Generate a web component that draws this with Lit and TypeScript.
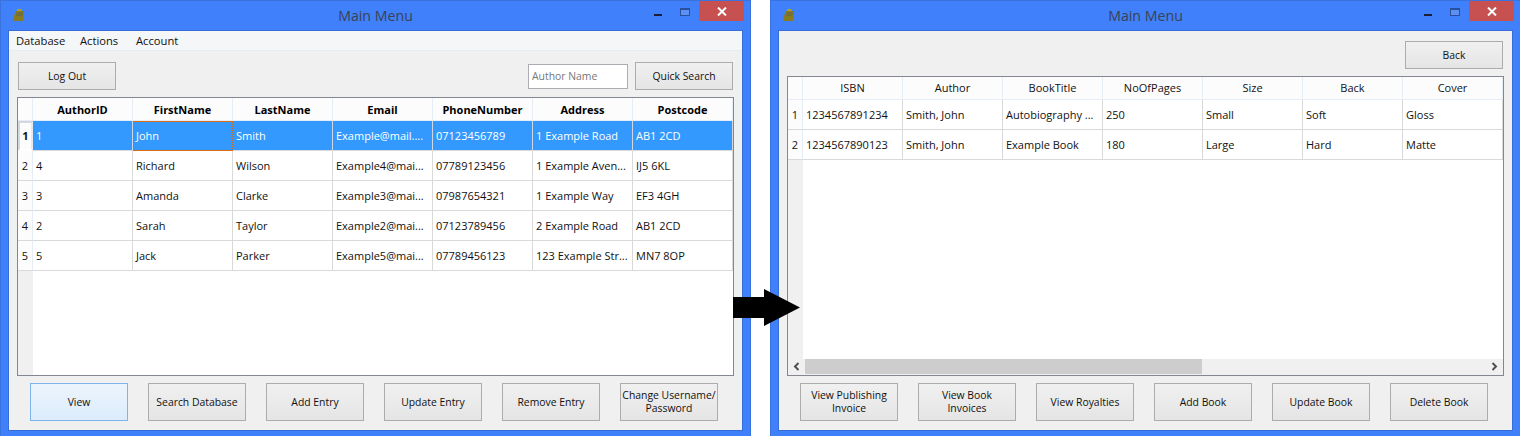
import { LitElement, html, css, nothing } from "lit";
import { customElement, property } from "lit/decorators.js";

const bookIcon = html`<svg class="icon" width="14" height="14" viewBox="0 0 14 14">
  <path d="M5 0h4l1 2H5z" fill="#a8a030"/>
  <path d="M4 2h8l-1 10H1l1-5z" fill="#8a7a22"/>
  <path d="M5 3h6l-.5 4H4z" fill="#74703a"/>
</svg>`;

@customElement("data-grid")
class DataGrid extends LitElement {
  @property({ type: Array }) columns: string[] = [];
  @property({ type: Array }) rows: string[][] = [];
  @property({ type: Boolean }) bold = false;
  @property({ type: Boolean }) selectable = false;
  @property({ type: Boolean }) scroll = false;

  static styles = css`
    :host { display: flex; flex-direction: column; flex: 1; min-height: 0; border: 1px solid #828790; background: #fff; overflow: hidden; }
    .row { display: flex; height: 30px; flex: none; }
    .head { height: 23px; background: #fcfcfd; }
    .rh { width: 15px; flex: none; box-sizing: border-box; text-align: center; line-height: 29px; border-right: 1px solid #e6edf7; border-bottom: 1px solid #d9d9d9; background: #fcfcfd; }
    .head .rh { border-bottom: 1px solid #e6edf7; }
    .rh.cur { font-weight: 700; border: 2px solid #d5d8dc; border-right-color: #e6e8ea; border-bottom-color: #fff; line-height: 25px; }
    .cell { width: 100px; flex: none; box-sizing: border-box; padding: 0 3px; line-height: 29px; white-space: nowrap; overflow: hidden; border-right: 1px solid #d9d9d9; border-bottom: 1px solid #d9d9d9; color: #111; }
    .th { text-align: center; line-height: 22px; border-right: 1px solid #e6edf7; border-bottom: 1px solid #e6edf7; }
    .bold .th { font-weight: 700; color: #000; line-height: 24px; }
    .sel .cell { background: #3399ff; color: #fff; border-right-color: #cfd8e2; border-bottom-color: #d9d9d9; }
    .sel .cell.focus { border: 1px dotted #d9690f; padding: 0 2px; line-height: 27px; }
    .rest { flex: 1; display: flex; min-height: 0; }
    .strip { width: 15px; background: #f0f0f0; }
    .bar { height: 16px; flex: none; display: flex; align-items: flex-start; background: #f0f0f0; }
    .arrow { width: 17px; height: 15px; flex: none; display: flex; align-items: center; justify-content: center; }
    .thumb { width: 397px; height: 15px; background: #cdcdcd; }
    .track { flex: 1; }
  `;

  render() {
    return html`
      <div class="row head ${this.bold ? "bold" : ""}">
        <div class="rh"></div>
        ${this.columns.map((c) => html`<div class="cell th">${c}</div>`)}
      </div>
      ${this.rows.map((r, i) => {
        const sel = this.selectable && i === 0;
        return html`<div class="row ${sel ? "sel" : ""}">
          <div class="rh ${sel ? "cur" : ""}">${i + 1}</div>
          ${r.map((v, j) => html`<div class="cell ${sel && j === 1 ? "focus" : ""}">${v}</div>`)}
        </div>`;
      })}
      <div class="rest"><div class="strip"></div></div>
      ${this.scroll
        ? html`<div class="bar">
            <div class="arrow"><svg width="7" height="9" viewBox="0 0 7 9"><path d="M5.500 1L2 4.500 5.500 8" fill="none" stroke="#505050" stroke-width="2"/></svg></div>
            <div class="thumb"></div>
            <div class="track"></div>
            <div class="arrow"><svg width="7" height="9" viewBox="0 0 7 9"><path d="M1.500 1L5 4.500 1.500 8" fill="none" stroke="#505050" stroke-width="2"/></svg></div>
          </div>`
        : nothing}
    `;
  }
}

@customElement("app-window")
class AppWindow extends LitElement {
  static styles = css`
    :host { display: flex; flex-direction: column; width: 751px; height: 436px; box-sizing: border-box; background: #4080fb; border: 1px solid #3a72de; border-bottom: none; flex: none; }
    .title { height: 29px; flex: none; display: grid; grid-template-columns: 1fr auto 1fr; align-items: start; }
    .left { padding: 8px 0 0 11px; }
    .icon { display: block; }
    .name { font-size: 14.200px; line-height: 30px; color: #3b4252; font-family: "Open Sans", "Noto Sans", sans-serif; }
    .ctrls { display: flex; justify-content: flex-end; padding-right: 6px; }
    .min { width: 8px; height: 2px; background: #1a1f33; margin: 13px 18px 0 0; }
    .max { width: 8px; height: 5px; border: 1px solid #2a4f9c; border-top-width: 2px; margin: 7px 9px 0 0; background: #5d90f5; }
    .close { width: 45px; height: 20px; background: #c75050; display: flex; align-items: center; justify-content: center; }
    .client { flex: 1; min-height: 0; margin: 0 7px 5px 7px; border: 1px solid #356ed8; background: #f0f0f0; display: flex; flex-direction: column; }
  `;
  render() {
    return html`
      <div class="title">
        <div class="left">${bookIcon}</div>
        <div class="name">Main Menu</div>
        <div class="ctrls">
          <div class="min"></div>
          <div class="max"></div>
          <div class="close"><svg width="10" height="9" viewBox="0 0 10 9"><path d="M1 .5L9 8.500M9 .5L1 8.500" stroke="#fff" stroke-width="2"/></svg></div>
        </div>
      </div>
      <div class="client"><slot></slot></div>
    `;
  }
}

const authors = [
  ["1", "John", "Smith", "Example@mail....", "07123456789", "1 Example Road", "AB1 2CD"],
  ["4", "Richard", "Wilson", "Example4@mai...", "07789123456", "1 Example Aven...", "IJ5 6KL"],
  ["3", "Amanda", "Clarke", "Example3@mai...", "07987654321", "1 Example Way", "EF3 4GH"],
  ["2", "Sarah", "Taylor", "Example2@mai...", "07123789456", "2 Example Road", "AB1 2CD"],
  ["5", "Jack", "Parker", "Example5@mai...", "07789456123", "123 Example Str...", "MN7 8OP"],
];
const books = [
  ["1234567891234", "Smith, John", "Autobiography ...", "250", "Small", "Soft", "Gloss"],
  ["1234567890123", "Smith, John", "Example Book", "180", "Large", "Hard", "Matte"],
];

@customElement("app-root")
class AppRoot extends LitElement {
  static styles = css`
    :host { display: block; width: 1520px; height: 438px; background: #fff; overflow: hidden; font-family: "Open Sans", "Noto Sans", sans-serif; font-size: 11px; color: #111; }
    .page { position: relative; display: flex; gap: 19px; }
    .menu { height: 20px; flex: none; box-sizing: border-box; display: grid; grid-template-columns: 64px 56px auto; justify-content: start; padding-left: 7px; background: #f5f6f7; border-bottom: 1px solid #e9ecee; line-height: 19px; font-size: 11.200px; color: #111; }
    .top { height: 28px; flex: none; display: flex; align-items: center; }
    .tools-a { margin: 11px 9px 7px 9px; }
    .tools-b { margin: 10px 9px 7px 9px; justify-content: flex-end; }
    .spacer { flex: 1; }
    button { width: 98px; height: 28px; flex: none; box-sizing: border-box; padding: 0; border: 1px solid #acacac; background: linear-gradient(#f0f0f0, #e5e5e5); font: inherit; font-size: 10.400px; color: #111; line-height: 13px; white-space: pre-line; }
    .foot button { height: 38px; }
    button.hot { border-color: #7eb4ea; background: linear-gradient(#ecf4fc, #dcecfc); }
    input { width: 100px; height: 25px; box-sizing: border-box; border: 1px solid #abadb3; background: #fff; padding: 0 3px; font: inherit; font-size: 10.400px; margin-right: 7px; }
    input::placeholder { color: #777; opacity: 1; }
    .body { flex: 1; min-height: 0; display: flex; margin: 0 8px; }
    .foot { flex: none; display: flex; gap: 20px; padding: 7px 0 9px 21px; }
    .arrow { position: absolute; left: 733px; top: 288px; }
  `;

  foot(labels: string[], hot = -1) {
    return html`<div class="foot">
      ${labels.map((l, i) => html`<button class=${i === hot ? "hot" : ""}>${l}</button>`)}
    </div>`;
  }

  render() {
    return html`
      <div class="page">
        <app-window>
          <div class="menu"><span>Database</span><span>Actions</span><span>Account</span></div>
          <div class="top tools-a">
            <button>Log Out</button>
            <div class="spacer"></div>
            <input placeholder="Author Name" />
            <button>Quick Search</button>
          </div>
          <div class="body">
            <data-grid bold selectable
              .columns=${["AuthorID", "FirstName", "LastName", "Email", "PhoneNumber", "Address", "Postcode"]}
              .rows=${authors}></data-grid>
          </div>
          ${this.foot(["View", "Search Database", "Add Entry", "Update Entry", "Remove Entry", "Change Username/\nPassword"], 0)}
        </app-window>
        <app-window>
          <div class="top tools-b"><button>Back</button></div>
          <div class="body">
            <data-grid scroll
              .columns=${["ISBN", "Author", "BookTitle", "NoOfPages", "Size", "Back", "Cover"]}
              .rows=${books}></data-grid>
          </div>
          ${this.foot(["View Publishing\nInvoice", "View Book\nInvoices", "View Royalties", "Add Book", "Update Book", "Delete Book"])}
        </app-window>
        <svg class="arrow" width="68" height="38" viewBox="0 0 68 38"><path d="M0 9h31V1l36 18.500-36 18.500v-8H0z" fill="#000"/></svg>
      </div>
    `;
  }
}
